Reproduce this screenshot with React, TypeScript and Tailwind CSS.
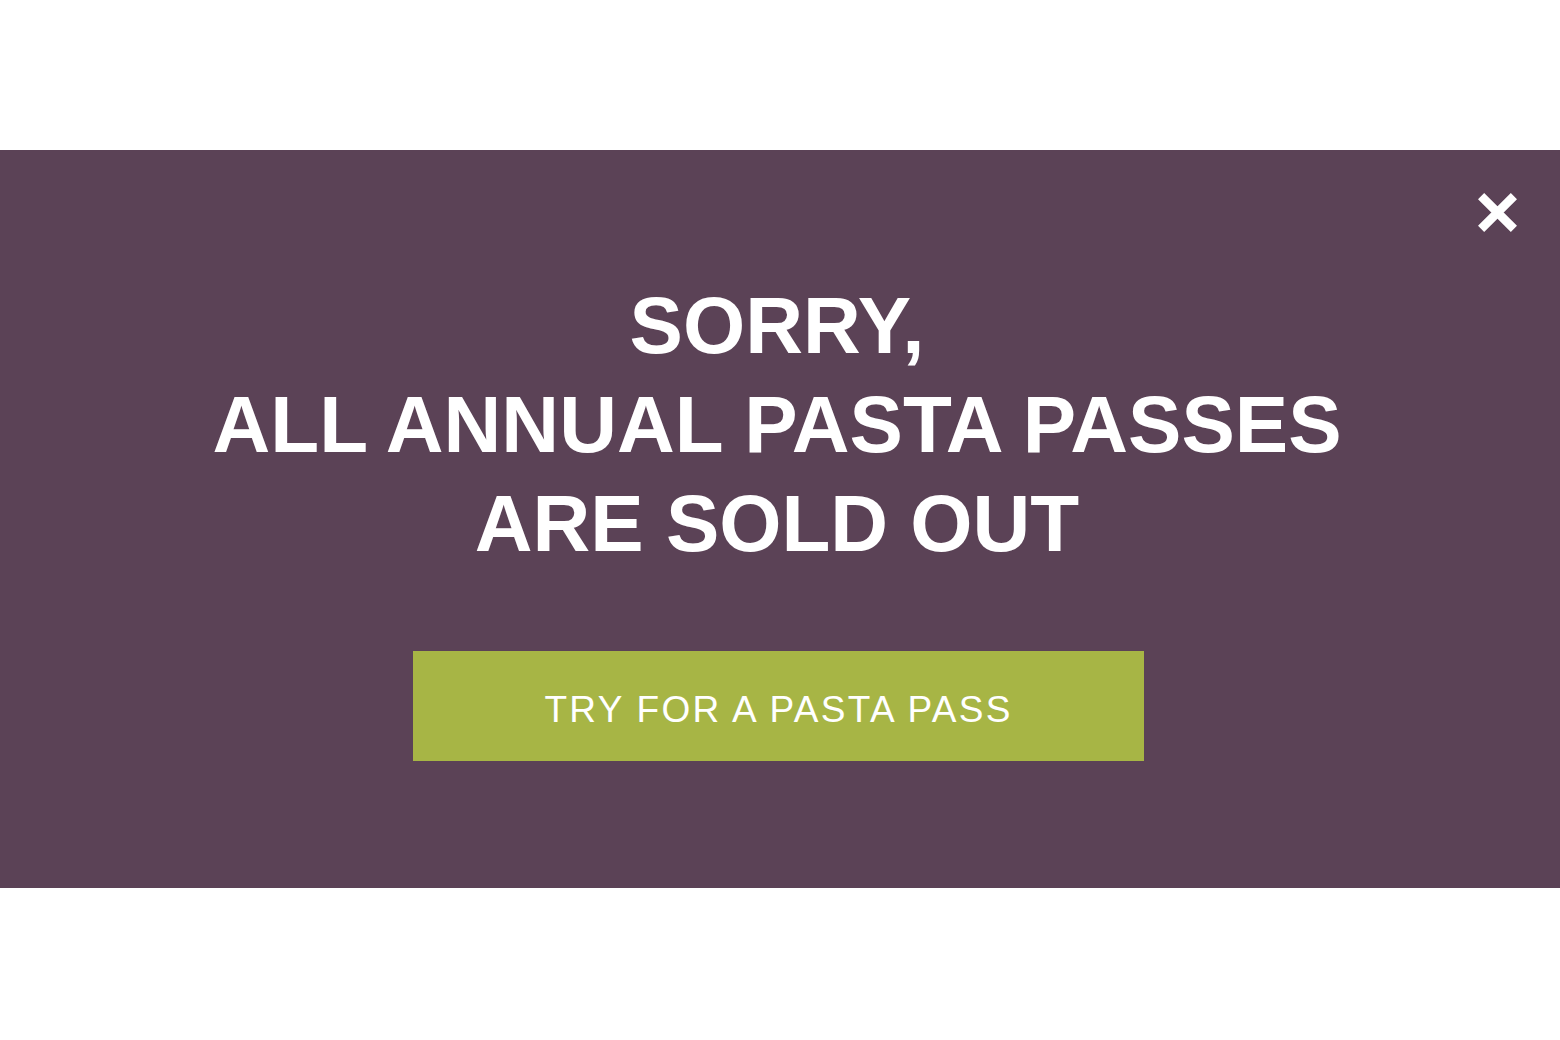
export default function App() {
  return (
    <div className="flex h-[1040px] w-full flex-col bg-white" style={{ fontFamily: '"Liberation Sans", Arial, sans-serif' }}>
      <div className="h-[150px]" />
      <section className="relative flex h-[738px] flex-col items-center bg-[#5b4256] pt-[126px]">
        <button className="absolute right-[42px] top-[42px] h-[41px] w-[41px]" aria-label="Close">
          <svg viewBox="0 0 40 40" className="h-full w-full">
            <path d="M4 4 L36 36 M36 4 L4 36" stroke="#ffffff" strokeWidth="8.5" strokeLinecap="butt" />
          </svg>
        </button>
        <h1 className="mr-[6px] text-center text-[80px] font-bold uppercase leading-[99px] tracking-[0px] text-white">
          Sorry,
          <br />
          All annual pasta passes
          <br />
          are sold out
        </h1>
        <a
          href="#"
          className="mr-[3px] mt-[78px] flex h-[110px] w-[731px] items-center justify-center bg-[#a7b545] pt-[7px] text-[37px] uppercase tracking-[2.3px] text-white"
        >
          Try for a pasta pass
        </a>
      </section>
    </div>
  );
}
